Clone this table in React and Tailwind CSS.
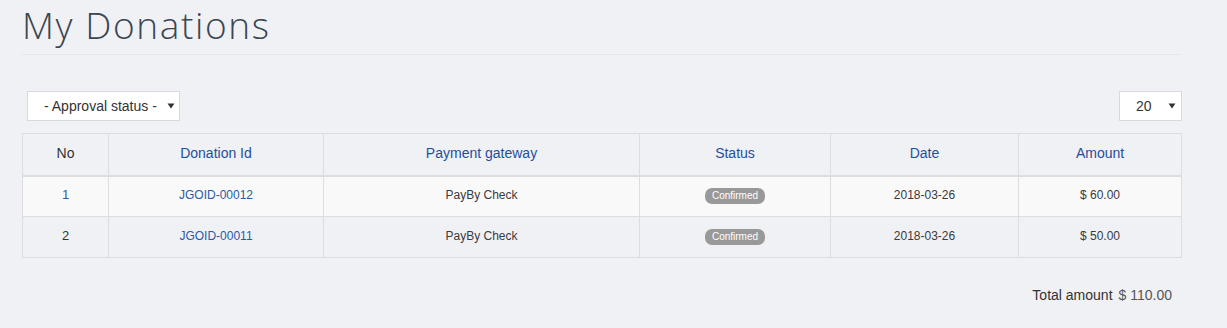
import React from 'react';

const rows = [
  { no: 1, id: 'JGOID-00012', gateway: 'PayBy Check', status: 'Confirmed', date: '2018-03-26', amount: '$ 60.00' },
  { no: 2, id: 'JGOID-00011', gateway: 'PayBy Check', status: 'Confirmed', date: '2018-03-26', amount: '$ 50.00' },
];

const Caret = () => (
  <svg width="8" height="6" viewBox="0 0 8 6" className="ml-auto">
    <path d="M0.5 0.5 L7.5 0.5 L4 5.5 Z" fill="#333" />
  </svg>
);

const App = () => {
  const head = 'border border-[#dcdde1] text-[#1f4e9c] font-normal pb-[2px]';
  const cell = 'border border-[#dcdde1] pb-[3px]';
  return (
    <div className="min-h-[328px] bg-[#f0f1f5] font-['Liberation_Sans',sans-serif] text-[#3a3a3a]">
      <div className="ml-[22px] w-[1160px]">
        <h1 className="pt-[3px] h-[55px] border-b border-[#e6e7eb] text-[37px] leading-[44px] font-light text-[#3a4650] font-['Open_Sans',sans-serif] tracking-[1.6px]">
          My Donations
        </h1>
        <div className="flex items-center justify-between mt-[36px] pl-[5px]">
          <div className="flex items-center w-[153px] h-[30px] bg-white border border-[#d9d9dc] pl-[16px] pr-[4px] text-[14px] text-[#333]">
            - Approval status -
            <Caret />
          </div>
          <div className="flex items-center w-[63px] h-[30px] bg-white border border-[#d9d9dc] pl-[16px] pr-[5px] text-[14px] text-[#333]">
            20
            <Caret />
          </div>
        </div>
        <table className="mt-[12px] w-[1160px] border-collapse text-center text-[12px]">
          <thead>
            <tr className="h-[42px] border-b-2 border-[#dcdde1] text-[14px]">
              <th className={`${head} w-[86px] text-[#333]`}>No</th>
              <th className={`${head} w-[215px]`}>Donation Id</th>
              <th className={`${head} w-[316px]`}>Payment gateway</th>
              <th className={`${head} w-[191px]`}>Status</th>
              <th className={`${head} w-[188px]`}>Date</th>
              <th className={head}>Amount</th>
            </tr>
          </thead>
          <tbody>
            {rows.map((r, i) => (
              <tr key={r.no} className={`h-[41px] ${i === 0 ? 'bg-[#f9f9f9]' : 'bg-[#f0f1f5]'}`}>
                <td className={`${cell} text-[13px] ${i === 0 ? 'text-[#2a5aa8]' : 'text-[#333]'}`}>{r.no}</td>
                <td className={`${cell} text-[#2a5aa8]`}>{r.id}</td>
                <td className={cell}>{r.gateway}</td>
                <td className={cell}>
                  <span className="inline-block px-[7px] h-[16px] leading-[16px] rounded-[7px] bg-[#999] text-white text-[10px]">
                    {r.status}
                  </span>
                </td>
                <td className={cell}>{r.date}</td>
                <td className={cell}>{r.amount}</td>
              </tr>
            ))}
          </tbody>
        </table>
        <div className="flex justify-end items-center gap-[6px] mt-[27px] pr-[10px] text-[14px]">
          <span className="text-[#333]">Total amount</span>
          <span className="text-[#555]">$ 110.00</span>
        </div>
      </div>
    </div>
  );
};

export default App;
